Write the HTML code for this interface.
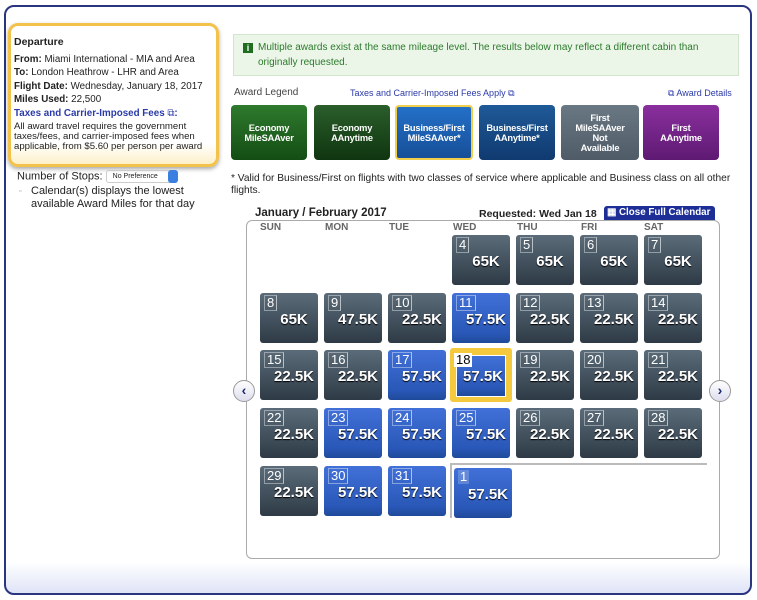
<!DOCTYPE html>
<html><head><meta charset="utf-8"><style>
*{box-sizing:border-box;margin:0;padding:0}
body{width:757px;height:600px;background:#fff;font-family:"Liberation Sans",Arial,sans-serif;position:relative;overflow:hidden;color:#222}
.frame{position:absolute;left:4px;top:5px;width:748px;height:590px;border:2px solid #2a3580;border-radius:10px;background:linear-gradient(to bottom,#fff 0,#fff 555px,#dfe3f7 100%)}
.dep{position:absolute;left:8px;top:23px;width:211px;height:144px;border:3px solid #f2c24a;border-radius:10px;background:linear-gradient(#fff 85%,#fdf0c8);box-shadow:0 2px 4px rgba(0,0,0,.35);padding:10px 0 0 3px;font-size:9.8px;line-height:13.6px;overflow:hidden}
.dep b{font-weight:bold}
.a{position:absolute;white-space:nowrap}
.msg{position:absolute;left:233px;top:34px;width:506px;height:42px;background:#ebf6e8;border:1px solid #d3e5cf;font-size:10px;color:#2d7a2d;padding:5px 8px 0 24px;line-height:15px}
.ic{position:absolute;left:9px;top:8px;width:10px;height:10px;background:#1f6e1f;color:#fff;font-size:9px;font-weight:bold;text-align:center;line-height:10px}
.lg{position:absolute;top:105px;height:55px;width:76px;border-radius:4px;color:#fff;font-size:9.3px;font-weight:bold;text-align:center;display:flex;align-items:center;justify-content:center;line-height:10px;letter-spacing:-.2px}
.cal{position:absolute;left:246px;top:220px;width:474px;height:339px;border:1px solid #aaa;border-radius:6px}
.dn{position:absolute;top:222px;font-size:10px;font-weight:bold;color:#666}
.c{position:absolute;width:58px;height:50px;border-radius:3px;background:linear-gradient(#5b6b79,#2e3b47);color:#fff}
.c.b{background:linear-gradient(#4170d8,#2a58b8 80%,#1f4a9a)}
.c i{position:absolute;left:4px;top:2px;font-style:normal;font-size:13px;line-height:14px;padding:0 2px;border:1px solid rgba(255,255,255,.4);border-right-color:rgba(255,255,255,.6)}
.c u{position:absolute;left:0;right:0;top:18px;text-decoration:none;font-weight:bold;font-size:15px;text-align:center;padding-left:10px;text-shadow:0 1px 1px #000}
.arr{position:absolute;top:380px;width:22px;height:22px;border-radius:50%;border:1px solid #999;background:linear-gradient(#fff,#dde);color:#1a2a6a;font-weight:bold;font-size:14px;text-align:center;line-height:19px}
</style></head><body>
<div class="frame"></div>
<div class="dep">
<div style="font-weight:bold;font-size:10.5px;margin-bottom:3px">Departure</div>
<div><b>From:</b> Miami International - MIA and Area</div>
<div><b>To:</b> London Heathrow - LHR and Area</div>
<div style="white-space:nowrap"><b>Flight Date:</b> Wednesday, January 18, 2017</div>
<div><b>Miles Used:</b> 22,500</div>
<div style="color:#2a3aa8;font-weight:bold">Taxes and Carrier-Imposed Fees <span style="font-weight:normal">⧉</span>:</div>
<div style="line-height:10px;font-size:9.6px;margin-top:1px">All award travel requires the government taxes/fees, and carrier-imposed fees when applicable, from $5.60 per person per award</div>
</div>
<div class="a" style="left:17px;top:170px;font-size:11px">Number of Stops: <span style="display:inline-block;width:72px;height:13px;border:1px solid #ccc;border-radius:3px;font-size:7px;vertical-align:middle;padding-left:6px;line-height:11px;position:relative">No Preference<span style="position:absolute;right:-1px;top:-1px;width:10px;height:13px;background:#3b7fe0;border-radius:3px"></span></span></div>
<div class="a" style="left:19px;top:188px;font-size:7px;color:#999">▫</div>
<div class="a" style="left:31px;top:185px;font-size:11px;line-height:13px">Calendar(s) displays the lowest<br>available Award Miles for that day</div>

<div class="msg"><div class="ic">i</div>Multiple awards exist at the same mileage level. The results below may reflect a different cabin than originally requested.</div>
<div class="a" style="left:234px;top:87px;font-size:10px;color:#444">Award Legend</div>
<div class="a" style="left:350px;top:88px;font-size:9px;color:#2a3aa8">Taxes and Carrier-Imposed Fees Apply ⧉</div>
<div class="a" style="left:668px;top:88px;font-size:9px;color:#2a3aa8">⧉ Award Details</div>
<div class="lg" style="left:231px;background:linear-gradient(#2e7a2e,#144d14)">Economy<br>MileSAAver</div>
<div class="lg" style="left:314px;background:linear-gradient(#2b5e2b,#0f3510)">Economy<br>AAnytime</div>
<div class="lg" style="left:395px;width:78px;background:linear-gradient(#2370c8,#174f98);border:2px solid #f2cf4a">Business/First<br>MileSAAver*</div>
<div class="lg" style="left:479px;background:linear-gradient(#1f5a98,#103a70)">Business/First<br>AAnytime*</div>
<div class="lg" style="left:561px;width:78px;background:linear-gradient(#6a7884,#4f5c68)">First<br>MileSAAver<br>Not<br>Available</div>
<div class="lg" style="left:643px;background:linear-gradient(#8a2f9e,#5e1a72)">First<br>AAnytime</div>
<div class="a" style="left:231px;top:173px;font-size:10.2px;line-height:12px">* Valid for Business/First on flights with two classes of service where applicable and Business class on all other<br>flights.</div>

<div class="a" style="left:255px;top:207px;font-size:11.5px;font-weight:bold">January / February 2017</div>
<div class="a" style="left:479px;top:208px;font-size:10.5px;font-weight:bold">Requested: Wed Jan 18</div>
<div class="a" style="left:604px;top:206px;width:111px;height:14px;background:#1d2f96;color:#fff;font-size:9.8px;font-weight:bold;padding-left:3px;line-height:14px;border-radius:3px 3px 0 0;overflow:hidden">▦ Close Full Calendar</div>
<div class="cal"></div>
<div class="dn" style="left:260px">SUN</div><div class="dn" style="left:325px">MON</div><div class="dn" style="left:389px">TUE</div><div class="dn" style="left:453px">WED</div><div class="dn" style="left:517px">THU</div><div class="dn" style="left:581px">FRI</div><div class="dn" style="left:644px">SAT</div>
<div class="a" style="left:451px;top:463px;width:256px;height:2px;background:#bbb"></div>
<div class="a" style="left:450px;top:463px;width:2px;height:55px;background:#bbb"></div>

<div class="c" style="left:452px;top:235px"><i>4</i><u>65K</u></div>
<div class="c" style="left:516px;top:235px"><i>5</i><u>65K</u></div>
<div class="c" style="left:580px;top:235px"><i>6</i><u>65K</u></div>
<div class="c" style="left:644px;top:235px"><i>7</i><u>65K</u></div>

<div class="c" style="left:260px;top:293px"><i>8</i><u>65K</u></div>
<div class="c" style="left:324px;top:293px"><i>9</i><u>47.5K</u></div>
<div class="c" style="left:388px;top:293px"><i>10</i><u>22.5K</u></div>
<div class="c b" style="left:452px;top:293px"><i>11</i><u>57.5K</u></div>
<div class="c" style="left:516px;top:293px"><i>12</i><u>22.5K</u></div>
<div class="c" style="left:580px;top:293px"><i>13</i><u>22.5K</u></div>
<div class="c" style="left:644px;top:293px"><i>14</i><u>22.5K</u></div>

<div class="c" style="left:260px;top:350px"><i>15</i><u>22.5K</u></div>
<div class="c" style="left:324px;top:350px"><i>16</i><u>22.5K</u></div>
<div class="c b" style="left:388px;top:350px"><i>17</i><u>57.5K</u></div>
<div class="a" style="left:450px;top:348px;width:62px;height:54px;background:#f4c93e;border-radius:3px"></div>
<div class="c b" style="left:456px;top:355px;width:50px;height:42px;border:1px solid #fff;border-radius:0"><i style="left:-3px;top:-3px;background:#fff;color:#000;border:none">18</i><u style="top:12px;padding-left:4px">57.5K</u></div>
<div class="c" style="left:516px;top:350px"><i>19</i><u>22.5K</u></div>
<div class="c" style="left:580px;top:350px"><i>20</i><u>22.5K</u></div>
<div class="c" style="left:644px;top:350px"><i>21</i><u>22.5K</u></div>

<div class="c" style="left:260px;top:408px"><i>22</i><u>22.5K</u></div>
<div class="c b" style="left:324px;top:408px"><i>23</i><u>57.5K</u></div>
<div class="c b" style="left:388px;top:408px"><i>24</i><u>57.5K</u></div>
<div class="c b" style="left:452px;top:408px"><i>25</i><u>57.5K</u></div>
<div class="c" style="left:516px;top:408px"><i>26</i><u>22.5K</u></div>
<div class="c" style="left:580px;top:408px"><i>27</i><u>22.5K</u></div>
<div class="c" style="left:644px;top:408px"><i>28</i><u>22.5K</u></div>

<div class="c" style="left:260px;top:466px"><i>29</i><u>22.5K</u></div>
<div class="c b" style="left:324px;top:466px"><i>30</i><u>57.5K</u></div>
<div class="c b" style="left:388px;top:466px"><i>31</i><u>57.5K</u></div>
<div class="c b" style="left:454px;top:468px"><i style="background:rgba(255,255,255,.2);border:none">1</i><u>57.5K</u></div>

<div class="arr" style="left:233px">‹</div>
<div class="arr" style="left:709px">›</div>
</body></html>
